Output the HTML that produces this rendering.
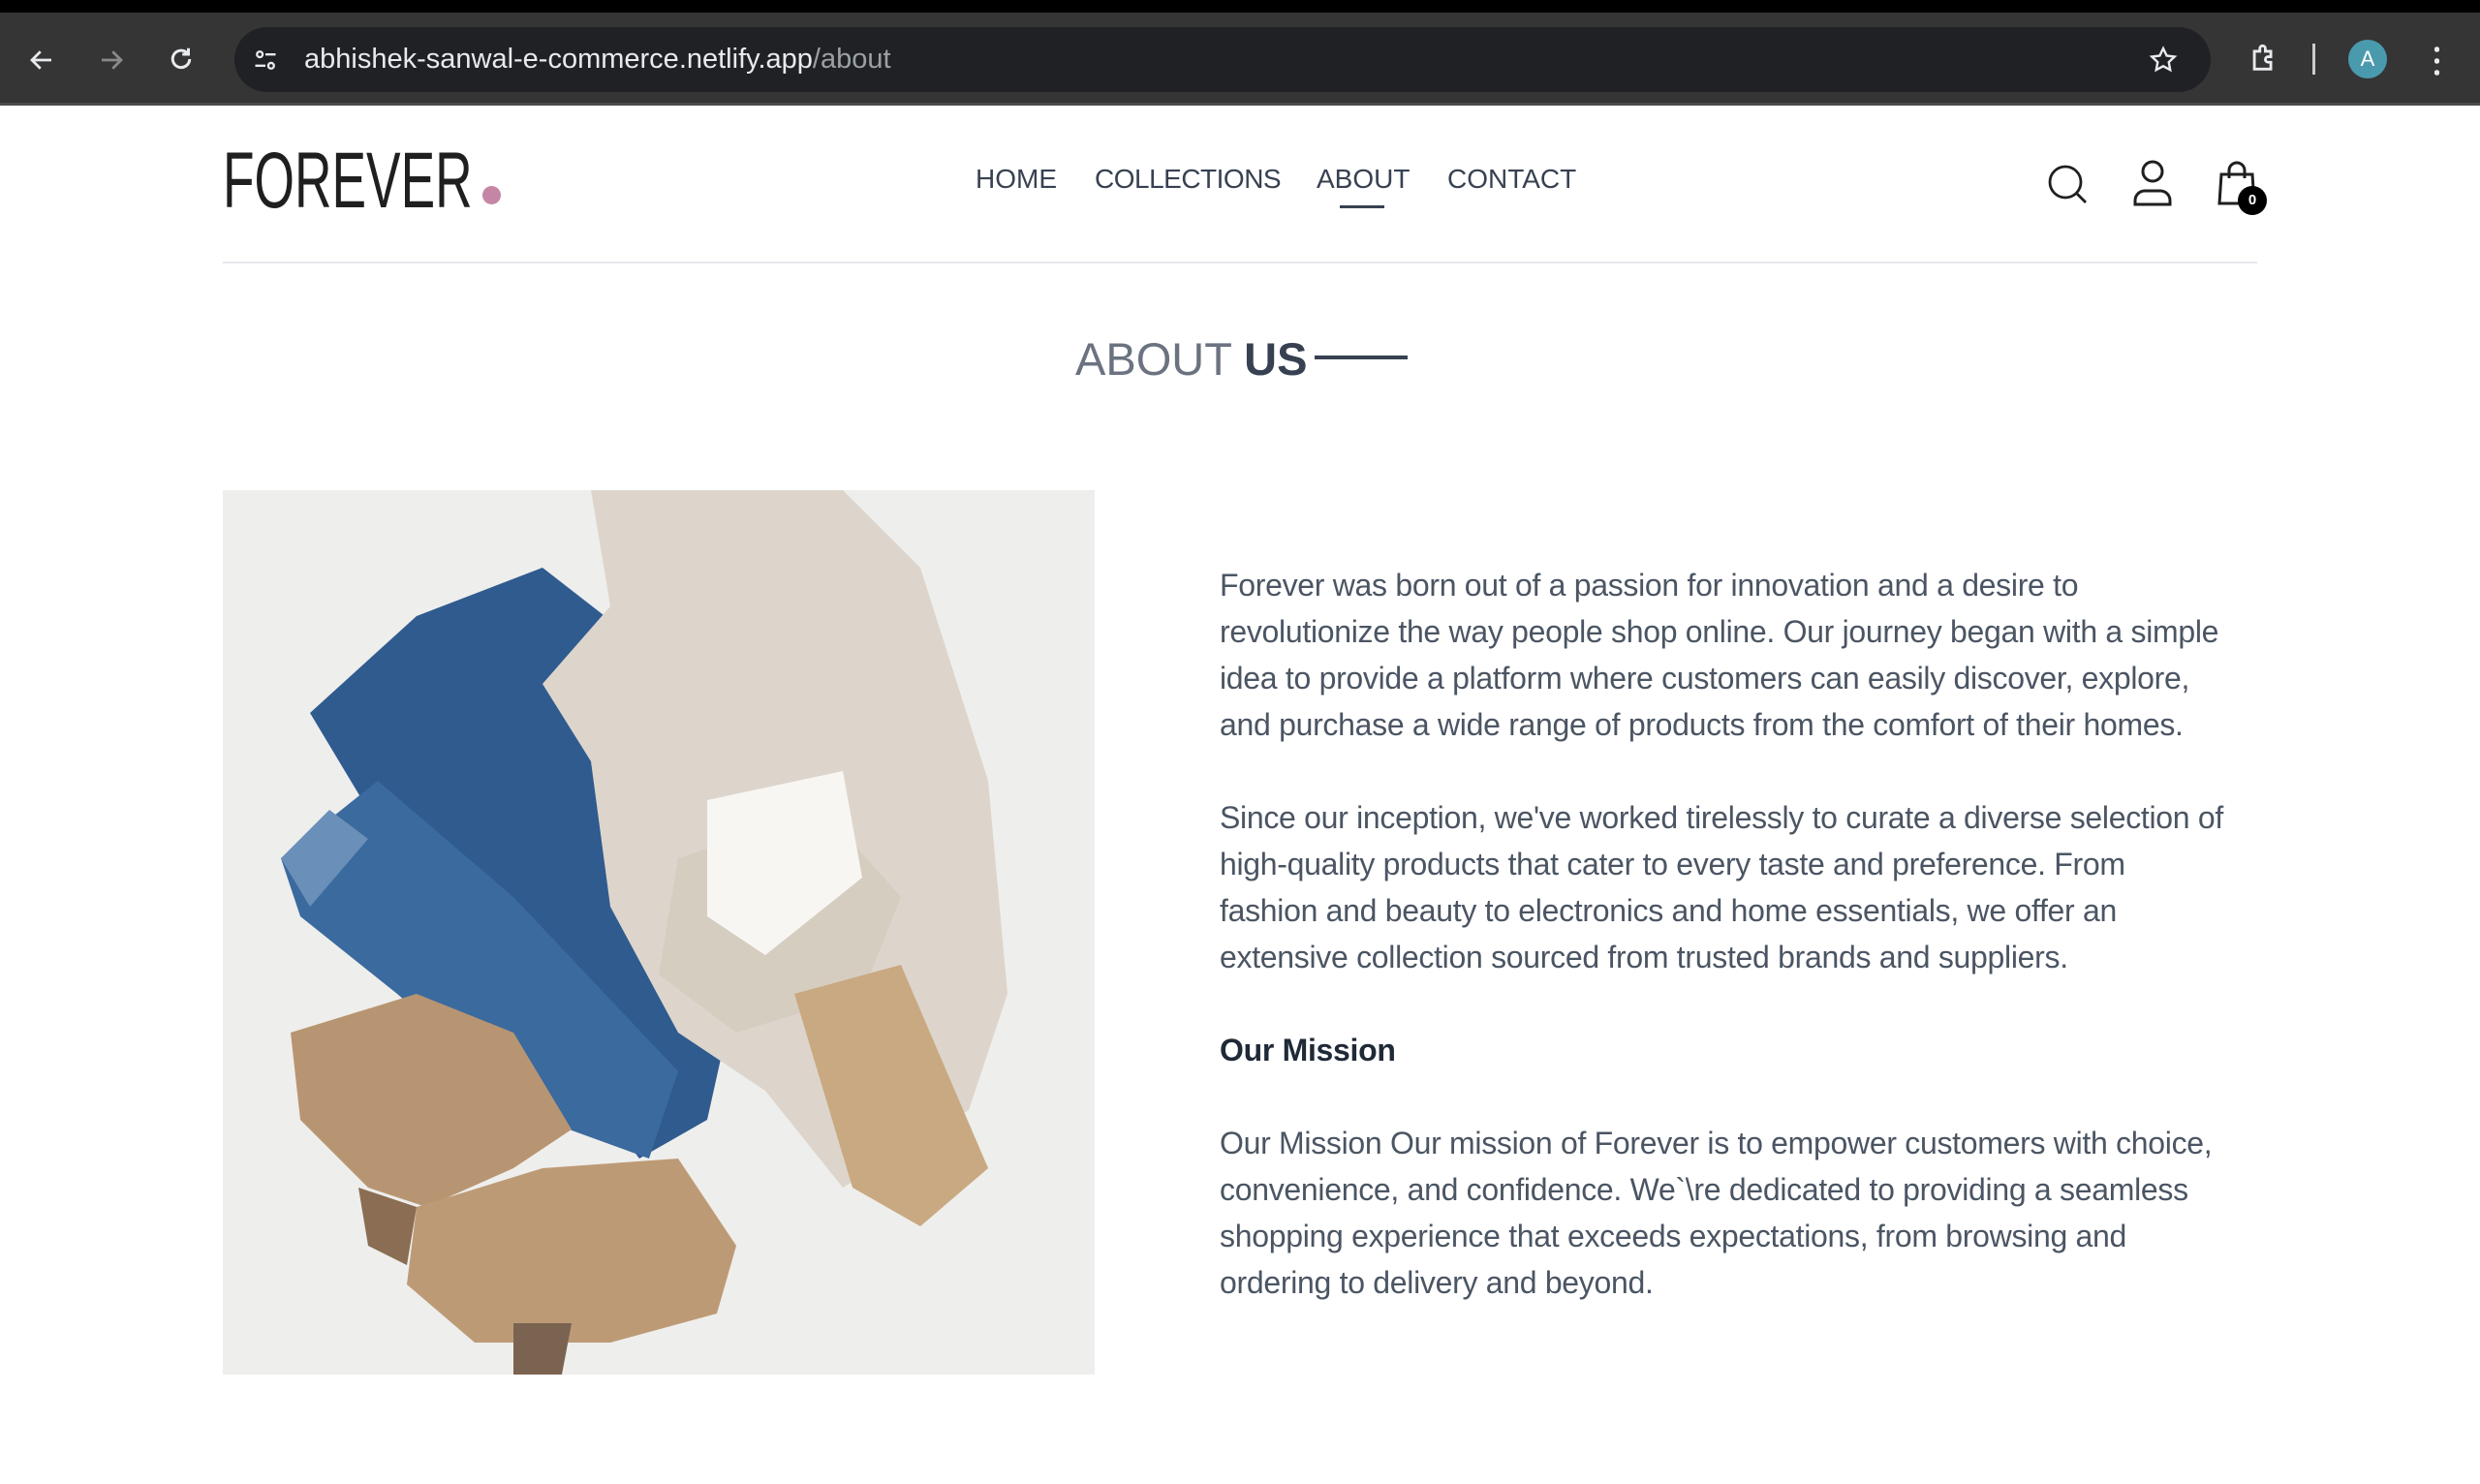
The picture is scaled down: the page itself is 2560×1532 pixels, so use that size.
<!DOCTYPE html>
<html><head><meta charset="utf-8">
<style>
*{margin:0;padding:0;box-sizing:border-box}
html,body{width:2560px;height:1532px;overflow:hidden;background:#fff;font-family:"Liberation Sans",sans-serif}
.tabs{position:absolute;left:0;top:0;width:2560px;height:14px;background:#000}
.toolbar{position:absolute;left:0;top:13px;width:2560px;height:96px;background:#353535;border-bottom:3px solid #4a4a4a}
.url{position:absolute;left:242px;top:15px;width:2040px;height:67px;background:#202124;border-radius:34px}
.url span{position:absolute;left:72px;top:17px;font-size:29px;color:#e8eaed;white-space:nowrap}
.url span i{font-style:normal;color:#9aa0a6}
.logo{position:absolute;left:230px;top:140px;font-size:82px;color:#1f1f1f;letter-spacing:0px;transform:scaleX(.65);transform-origin:left;white-space:nowrap}
.dot{position:absolute;left:498px;top:192px;width:19px;height:19px;border-radius:50%;background:#c586a5}
.nav{position:absolute;top:169px;font-size:28px;color:#374151;white-space:nowrap}
.ul{position:absolute;left:1383px;top:212px;width:46px;height:3px;background:#374151}
.hr{position:absolute;left:230px;top:270px;width:2100px;height:2px;background:#e5e7eb}
.title{position:absolute;left:1110px;top:343px;font-size:47px;color:#6b7280;white-space:nowrap}
.title b{color:#374151}
.tline{position:absolute;left:1357px;top:367px;width:96px;height:4px;background:#374151}
.img{position:absolute;left:230px;top:506px;width:900px;height:913px;background:#f1f1f0;overflow:hidden}
.txt{position:absolute;left:1259px;top:580px;font-size:32px;line-height:48px;color:#4b5563;white-space:nowrap;letter-spacing:-0.3px}
.txt p{margin-bottom:48px}
.txt h4{font-size:32px;color:#1f2937;margin-bottom:48px}
</style></head><body>
<div class="tabs"></div>
<div class="toolbar">
<svg style="position:absolute;left:28px;top:34px" width="30" height="30" viewBox="0 0 24 24" fill="none" stroke="#e8eaed" stroke-width="2.2"><path d="M20 12H5M11 5l-7 7 7 7"/></svg>
<svg style="position:absolute;left:100px;top:34px" width="30" height="30" viewBox="0 0 24 24" fill="none" stroke="#8a8a8a" stroke-width="2.2"><path d="M4 12h15M13 5l7 7-7 7"/></svg>
<svg style="position:absolute;left:172px;top:33px" width="30" height="30" viewBox="0 0 24 24" fill="none" stroke="#e8eaed" stroke-width="2.4"><path d="M19 12a7 7 0 1 1-2-5"/><path d="M18 3v5h-5"/></svg>
<div class="url">
<svg style="position:absolute;left:18px;top:20px" width="28" height="28" viewBox="0 0 24 24" fill="none" stroke="#e8eaed" stroke-width="2"><circle cx="7" cy="7" r="2.5"/><path d="M12 7h9M3 17h9"/><circle cx="17" cy="17" r="2.5"/></svg>
<span>abhishek-sanwal-e-commerce.netlify.app<i>/about</i></span>
<svg style="position:absolute;left:1975px;top:18px" width="32" height="32" viewBox="0 0 24 24" fill="none" stroke="#e8eaed" stroke-width="1.8"><path d="M12 3l2.7 5.6 6.1.8-4.5 4.2 1.1 6L12 16.7 6.6 19.6l1.1-6L3.2 9.4l6.1-.8z"/></svg>
</div>
<svg style="position:absolute;left:2320px;top:30px" width="34" height="34" viewBox="0 0 24 24" fill="none" stroke="#e8eaed" stroke-width="2"><path d="M5 7h4V5a2 2 0 0 1 4 0v2h4v4h-2a2 2 0 0 0 0 4h2v5H5z"/></svg>
<div style="position:absolute;left:2387px;top:32px;width:3px;height:32px;background:#ccc"></div>
<div style="position:absolute;left:2424px;top:28px;width:40px;height:40px;border-radius:50%;background:#4a9aae;color:#fff;font-size:22px;text-align:center;line-height:40px">A</div>
<div style="position:absolute;left:2513px;top:32px;width:5px;height:34px;background:radial-gradient(circle,#e8eaed 2.5px,transparent 3px) 0 0/5px 12px"></div>
</div>

<div class="logo">FOREVER</div>
<div class="dot"></div>
<div class="nav" style="left:1007px">HOME</div>
<div class="nav" style="left:1130px;letter-spacing:-0.5px">COLLECTIONS</div>
<div class="nav" style="left:1359px">ABOUT</div>
<div class="nav" style="left:1494px">CONTACT</div>
<div class="ul"></div>
<svg style="position:absolute;left:2110px;top:166px" width="48" height="48" viewBox="0 0 24 24" fill="none" stroke="#1f1f1f" stroke-width="1.4"><circle cx="11" cy="11" r="8"/><path d="M17 17l4.5 4.5"/></svg>
<svg style="position:absolute;left:2198px;top:163px" width="48" height="52" viewBox="0 0 24 26" fill="none" stroke="#1f1f1f" stroke-width="1.5"><circle cx="12" cy="7" r="5"/><path d="M3 24v-2a5 5 0 0 1 5-5h8a5 5 0 0 1 5 5v2z"/></svg>
<svg style="position:absolute;left:2286px;top:164px" width="46" height="52" viewBox="0 0 22 26" fill="none" stroke="#1f1f1f" stroke-width="1.5"><path d="M3 8h16l1 15H2z"/><path d="M7 10V6a4 4 0 0 1 8 0v4"/></svg>
<div style="position:absolute;left:2310px;top:192px;width:30px;height:30px;border-radius:50%;background:#000;color:#fff;font-size:15px;font-weight:bold;text-align:center;line-height:30px">0</div>
<div class="hr"></div>

<div class="title">ABOUT <b>US</b></div>
<div class="tline"></div>

<div class="img">
<svg width="900" height="913" viewBox="0 0 900 913">
<rect width="900" height="913" fill="#eeeeec"/>
<path d="M200 130 L330 80 L420 150 L470 330 L520 560 L500 650 L430 690 L330 560 L210 420 L150 330 L90 230 Z" fill="#2f5b8f"/>
<path d="M60 380 L160 300 L300 420 L470 600 L440 690 L330 650 L180 520 L80 440 Z" fill="#3b6a9e"/>
<path d="M60 380 L110 330 L150 360 L90 430 Z" fill="#6a8fb8"/>
<path d="M380 0 L640 0 L720 80 L790 300 L810 520 L770 640 L640 720 L560 620 L470 560 L400 430 L380 280 L330 200 L400 120 Z" fill="#ddd5cb"/>
<path d="M470 380 L620 330 L700 420 L660 520 L530 560 L450 500 Z" fill="#d6cdc1"/>
<path d="M500 320 L640 290 L660 400 L560 480 L500 440 Z" fill="#f7f6f3"/>
<path d="M590 520 L700 490 L790 700 L720 760 L650 720 Z" fill="#c9a982"/>
<path d="M70 560 L200 520 L300 560 L360 660 L300 700 L210 740 L150 720 L80 650 Z" fill="#b89572"/>
<path d="M200 740 L330 700 L470 690 L530 780 L510 850 L400 880 L260 880 L190 820 Z" fill="#bd9a76"/>
<path d="M140 720 L200 740 L190 800 L150 780 Z" fill="#8a6d52"/>
<path d="M300 860 L360 860 L350 913 L300 913 Z" fill="#7a6350"/>
</svg>
</div>

<div class="txt">
<p>Forever was born out of a passion for innovation and a desire to<br>revolutionize the way people shop online. Our journey began with a simple<br>idea to provide a platform where customers can easily discover, explore,<br>and purchase a wide range of products from the comfort of their homes.</p>
<p>Since our inception, we've worked tirelessly to curate a diverse selection of<br>high-quality products that cater to every taste and preference. From<br>fashion and beauty to electronics and home essentials, we offer an<br>extensive collection sourced from trusted brands and suppliers.</p>
<h4>Our Mission</h4>
<p>Our Mission Our mission of Forever is to empower customers with choice,<br>convenience, and confidence. We`\re dedicated to providing a seamless<br>shopping experience that exceeds expectations, from browsing and<br>ordering to delivery and beyond.</p>
</div>
</body></html>
